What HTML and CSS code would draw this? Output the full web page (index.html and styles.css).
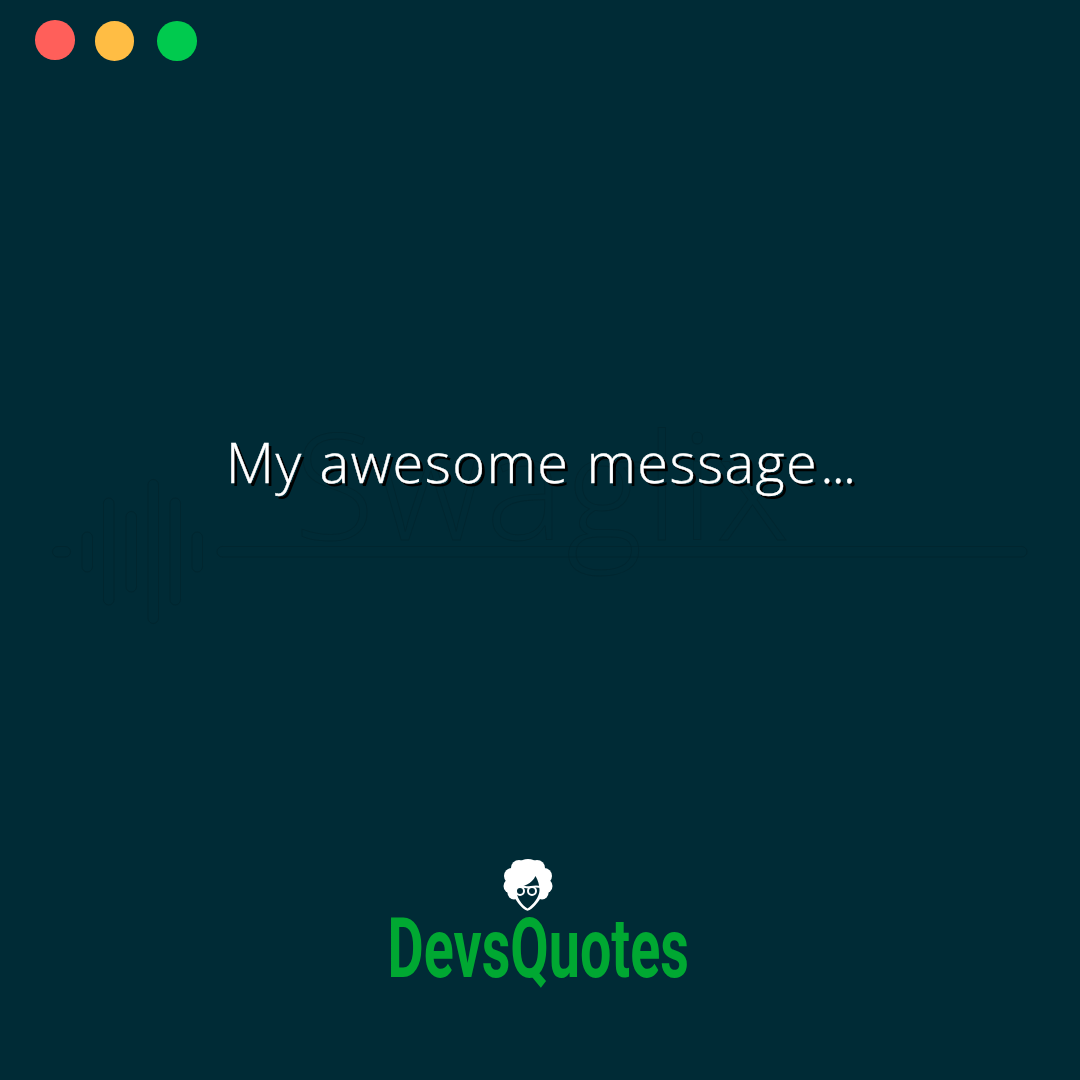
FILE: index.html
```html
<!DOCTYPE html>
<html lang="en">
<head>
<meta charset="utf-8">
<title>My awesome message</title>
<link rel="stylesheet" href="styles.css">
</head>
<body>
<div class="page">
  <svg class="watermark" viewBox="0 0 1080 1080" width="1080" height="1080" aria-hidden="true">
    <g class="wave">
      <rect x="52.5" y="546.5" width="18" height="10.5" rx="5.25"/>
      <rect x="82" y="532" width="10.5" height="40" rx="5.25"/>
      <rect x="103.5" y="498" width="10.5" height="107" rx="5.25"/>
      <rect x="126" y="511.5" width="10.5" height="80.5" rx="5.25"/>
      <rect x="148" y="479.5" width="10.5" height="144" rx="5.25"/>
      <rect x="170" y="498" width="10.5" height="107" rx="5.25"/>
      <rect x="192" y="532" width="10.5" height="40" rx="5.25"/>
      <rect x="217" y="546.5" width="810" height="10.5" rx="5.25"/>
    </g>
    <text class="wordmark" x="294" y="540">Swaglix</text>
  </svg>
  <header class="dots">
    <span class="dot dot-red"></span>
    <span class="dot dot-yellow"></span>
    <span class="dot dot-green"></span>
  </header>
  <main class="message">
    <p class="message-text">My awesome message<span class="ellipsis">...</span></p>
  </main>
  <footer class="brand">
    <svg class="brand-icon" viewBox="0 0 50 52" width="50" height="52" aria-hidden="true">
      <g class="hair">
        <circle cx="25" cy="14" r="14"/>
        <circle cx="16" cy="9" r="8"/>
        <circle cx="34" cy="9" r="8"/>
        <circle cx="9" cy="17" r="8"/>
        <circle cx="41" cy="17" r="8"/>
        <circle cx="8" cy="27" r="7.500"/>
        <circle cx="42" cy="27" r="7.500"/>
        <circle cx="11" cy="34" r="6.500"/>
        <circle cx="39" cy="34" r="6.500"/>
        <rect x="10" y="12" width="30" height="26"/>
        <path d="M10 35 C14 44 19 50 24.500 51.800 C30 50 35 44 40 35 Z"/>
      </g>
      <path class="face" d="M13 28 C20 28 29 25 32.500 17 C35 21 36.500 26 36.500 31 C36.500 38 30 46 24.500 49.500 C19 46 13 39 13 28 Z"/>
      <g class="glasses">
        <path class="temple" d="M11.500 29 C15 27.300 18 27.300 22 28 C24 28.500 26 28.500 28 28 C31 27.300 35 27.300 38 28"/>
        <circle cx="17" cy="32" r="4"/>
        <circle cx="29" cy="32" r="4"/>
      </g>
    </svg>
    <div class="brand-name">DevsQuotes</div>
  </footer>
</div>
</body>
</html>
```
FILE: styles.css
```css
* { box-sizing: border-box; }
html, body { margin: 0; padding: 0; }
body { background: #002b36; }

.page {
  position: relative;
  width: 1080px;
  height: 1080px;
  overflow: hidden;
  background: #002b36;
  display: flex;
  flex-direction: column;
}

.watermark {
  position: absolute;
  left: 0;
  top: 0;
}
.wave rect {
  fill: none;
  stroke: #01262f;
  stroke-width: 1;
}
.wordmark {
  font-family: "Open Sans", sans-serif;
  font-weight: 300;
  font-size: 148px;
  letter-spacing: 2px;
  fill: none;
  stroke: #01262f;
  stroke-width: 0.800;
}

.dots {
  position: relative;
  display: flex;
  align-items: flex-start;
  height: 61px;
  padding: 21px 0 0 35px;
  gap: 20px;
}
.dot {
  width: 39.500px;
  height: 39.500px;
  border-radius: 50%;
  display: block;
}
.dot-red { background: #ff5f5a; margin-top: -1px; }
.dot-yellow { background: #ffbd44; }
.dot-green { background: #00ca4e; margin-left: 3px; }

.message {
  position: relative;
  height: 798px;
  display: flex;
  flex-direction: column;
  align-items: center;
}
.message-text {
  margin: 362px 0 0;
  font-family: "Open Sans", sans-serif;
  font-weight: 300;
  font-size: 56px;
  line-height: 76px;
  letter-spacing: 1.400px;
  word-spacing: 1px;
  color: #fff;
  -webkit-text-stroke: 0.400px #fff;
  text-shadow: 3px 3px 0 #000;
  white-space: nowrap;
}
.ellipsis {
  letter-spacing: -2px;
  margin-left: 2px;
}

.brand {
  position: relative;
  display: flex;
  flex-direction: column;
  align-items: center;
  margin-left: -4px;
}
.brand-icon { display: block; margin-right: 20px; }
.hair circle, .hair rect, .hair path { fill: #fff; }
.face { fill: #002b36; }
.glasses circle { fill: #002b36; stroke: #fff; stroke-width: 2; }
.temple { fill: none; stroke: #fff; stroke-width: 2; }

.brand-name {
  font-family: "Roboto", sans-serif;
  font-weight: 700;
  font-size: 84px;
  line-height: 76px;
  color: #00a832;
  white-space: nowrap;
  transform: scaleX(0.663);
}
```
